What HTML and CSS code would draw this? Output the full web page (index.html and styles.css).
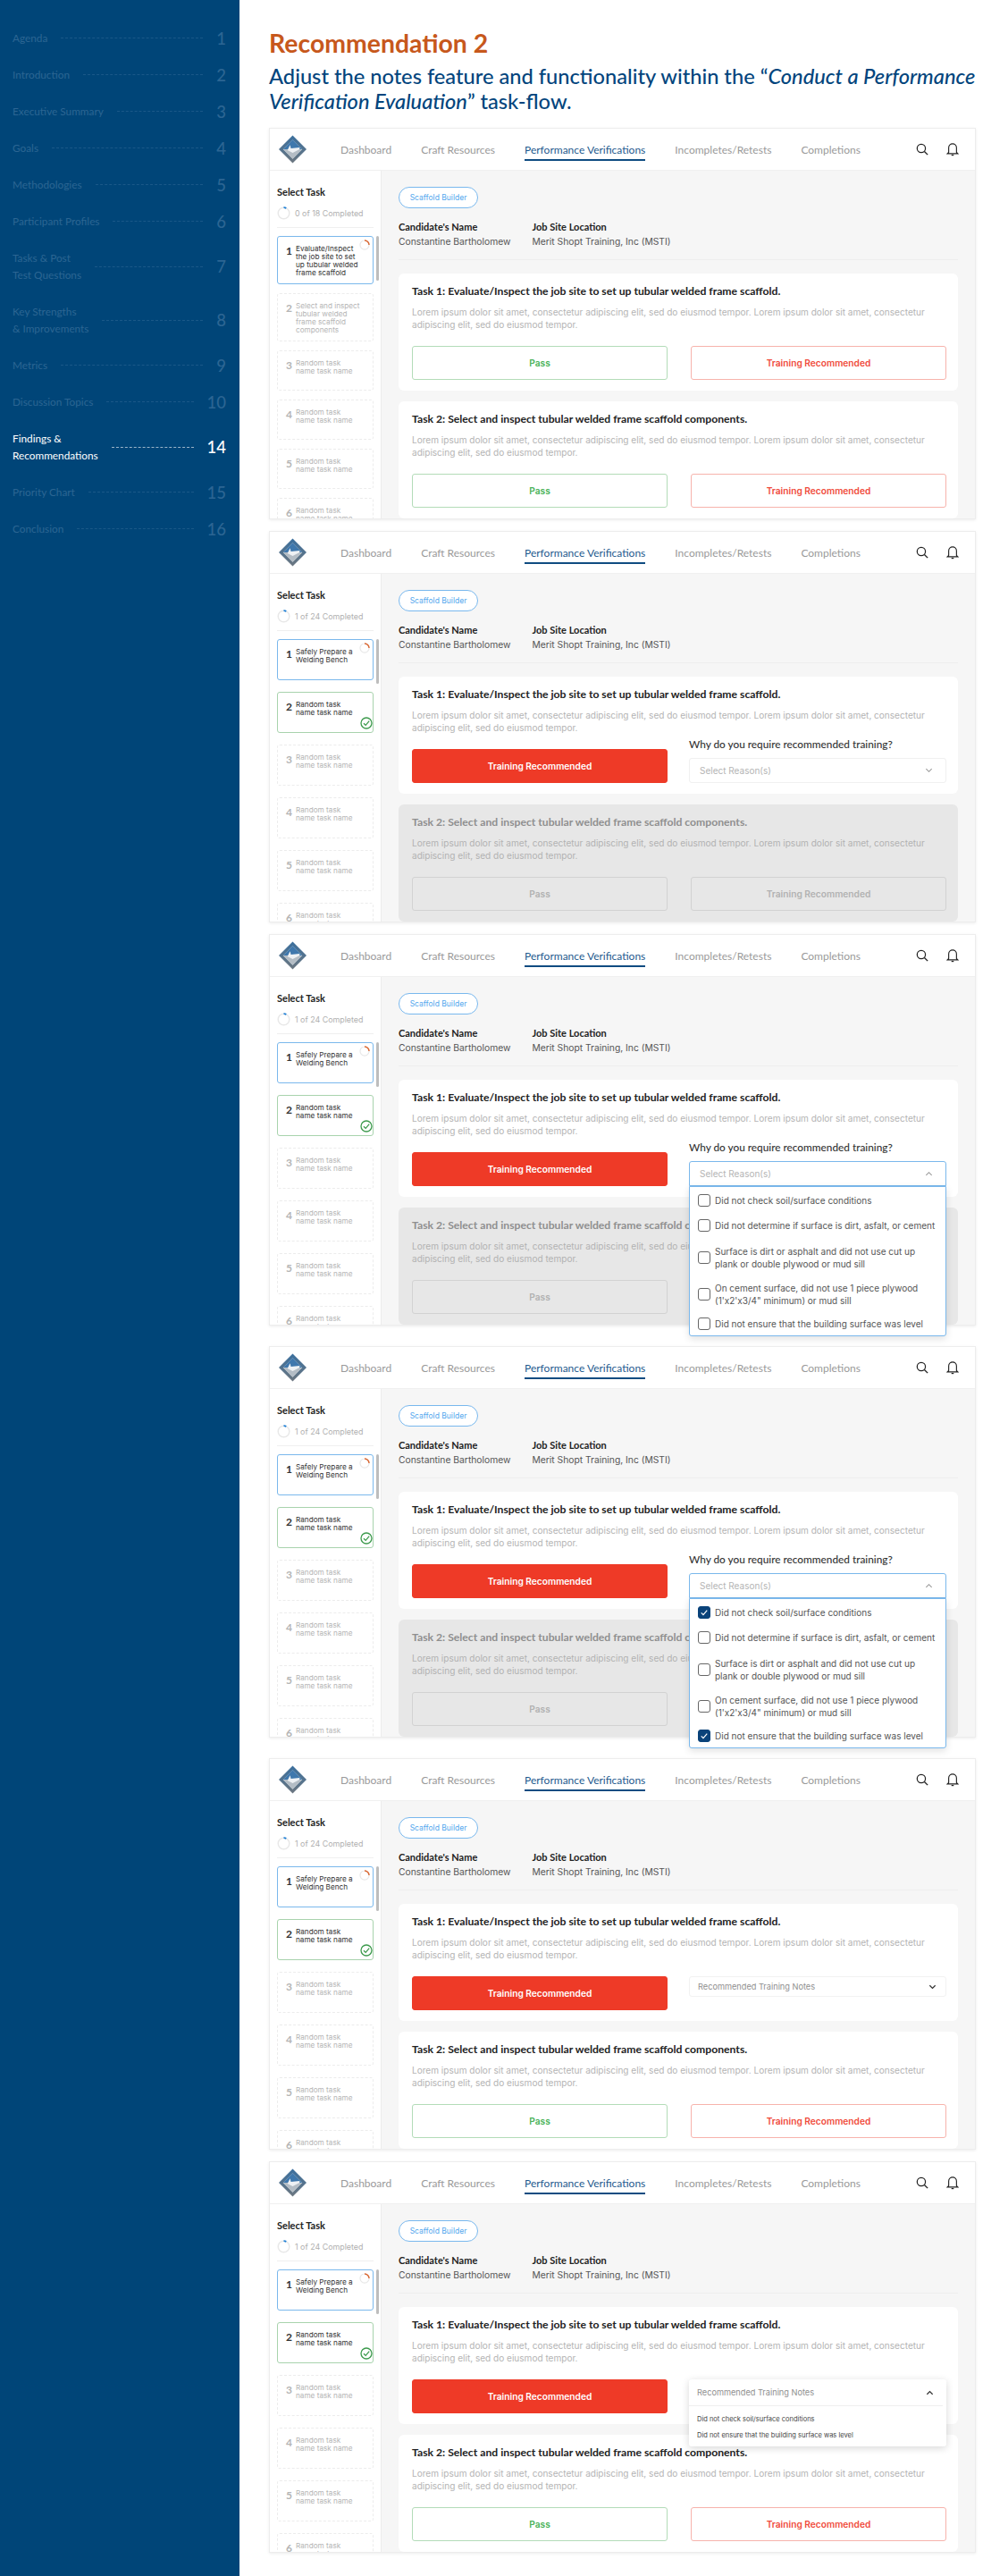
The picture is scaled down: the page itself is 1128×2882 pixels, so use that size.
FILE: index.html
```html
<!DOCTYPE html>
<html lang="en">
<head>
    <meta charset="UTF-8">
    <title>Recommendation 2</title>
    <link rel="stylesheet" href="styles.css">
</head>
<body>
    <svg class="defs" width="0" height="0">
        <defs>
            <linearGradient id="logo-edge" x1="0" y1="0" x2="0" y2="1">
                <stop offset="0" stop-color="#3a6f9e"/>
                <stop offset="1" stop-color="#6d7780"/>
            </linearGradient>
        </defs>
        <symbol id="logo" viewBox="0 0 32 32">
            <polygon points="16,0 32,16 16,32 0,16" fill="url(#logo-edge)"/>
            <polygon points="16,5 27,16 16,27 5,16" fill="#d5dbe0"/>
            <polygon points="16,5 27,16 5,16" fill="#3f78ad"/>
            <polygon points="5,16 27,16 16,27" fill="#b4bdc5"/>
            <path d="M10 17 L13 11 L14 15 L24 14 L24 16 L16 20 Z" fill="#eef1f4"/>
        </symbol>
        <symbol id="search" viewBox="0 0 16 16">
            <circle cx="6.8" cy="6.8" r="5.3" fill="none" stroke="#222" stroke-width="1.4"/>
            <path d="M10.8 10.8 L15 15" stroke="#222" stroke-width="1.6"/>
        </symbol>
        <symbol id="bell" viewBox="0 0 16 18">
            <path d="M3 13 V7 a5 5 0 0 1 10 0 V13 L14.5 14.5 H1.5 Z" fill="none" stroke="#222" stroke-width="1.3"/>
            <path d="M6.5 16.5 H9.5" stroke="#222" stroke-width="1.4"/>
        </symbol>
        <symbol id="ring-blue" viewBox="0 0 16 16">
            <circle cx="8" cy="8" r="6.7" fill="none" stroke="#e8e8e8" stroke-width="1.6"/>
            <path d="M8 1.3 A6.7 6.7 0 0 1 11 2" fill="none" stroke="#1d7fd6" stroke-width="1.8"/>
        </symbol>
        <symbol id="ring-orange" viewBox="0 0 16 16">
            <circle cx="8" cy="8" r="6.7" fill="none" stroke="#e8e8e8" stroke-width="1.6"/>
            <path d="M8 1.3 A6.7 6.7 0 0 1 14.7 8" fill="none" stroke="#d9622b" stroke-width="1.8"/>
        </symbol>
        <symbol id="done" viewBox="0 0 14 14">
            <circle cx="7" cy="7" r="6" fill="#fff" stroke="#3c9a4c" stroke-width="1.3"/>
            <path d="M4 7.2 L6.2 9.4 L10.2 4.6" fill="none" stroke="#3c9a4c" stroke-width="1.3"/>
        </symbol>
        <symbol id="tick" viewBox="0 0 14 14">
            <path d="M3.2 7.4 L5.8 10 L10.8 4.2" fill="none" stroke="#fff" stroke-width="1.4"/>
        </symbol>
    </svg>

    <div id="wrap">
        <!--left navigation-->
        <ul id="leftnav">
            <li><span>Agenda</span><i></i><b>1</b></li>
            <li><span>Introduction</span><i></i><b>2</b></li>
            <li><span>Executive Summary</span><i></i><b>3</b></li>
            <li><span>Goals</span><i></i><b>4</b></li>
            <li><span>Methodologies</span><i></i><b>5</b></li>
            <li><span>Participant Profiles</span><i></i><b>6</b></li>
            <li class="two"><span>Tasks &amp; Post<br>Test Questions</span><i></i><b>7</b></li>
            <li class="two"><span>Key Strengths<br>&amp; Improvements</span><i></i><b>8</b></li>
            <li><span>Metrics</span><i></i><b>9</b></li>
            <li><span>Discussion Topics</span><i></i><b>10</b></li>
            <li class="two on"><span>Findings &amp;<br>Recommendations</span><i></i><b>14</b></li>
            <li><span>Priority Chart</span><i></i><b>15</b></li>
            <li><span>Conclusion</span><i></i><b>16</b></li>
        </ul>

        <div id="content">
            <h1>Recommendation 2</h1>
            <h2>Adjust the notes feature and functionality within the “<em>Conduct a Performance<br>Verification Evaluation</em>” task-flow.</h2>

            <!--screen 1-->
            <div class="panel">
                <div class="topbar">
                    <svg class="logo"><use href="#logo"/></svg>
                    <a>Dashboard</a><a>Craft Resources</a><a class="active">Performance Verifications</a><a>Incompletes/Retests</a><a>Completions</a>
                    <svg class="icon first"><use href="#search"/></svg><svg class="icon"><use href="#bell"/></svg>
                </div>
                <div class="body">
                    <div class="tasks">
                        <h3>Select Task</h3>
                        <div class="count"><svg><use href="#ring-blue"/></svg>0 of 18 Completed</div>
                        <div class="scroll"></div>
                        <div class="list tight">
                            <div class="task current tall"><b>1</b><p>Evaluate/Inspect<br>the job site to set<br>up tubular welded<br>frame scaffold</p><svg class="ring"><use href="#ring-orange"/></svg></div>
                            <div class="task tall"><b>2</b><p>Select and inspect<br>tubular welded<br>frame scaffold<br>components</p></div>
                            <div class="task"><b>3</b><p>Random task<br>name task name</p></div>
                            <div class="task"><b>4</b><p>Random task<br>name task name</p></div>
                            <div class="task"><b>5</b><p>Random task<br>name task name</p></div>
                            <div class="task"><b>6</b><p>Random task<br>name task name</p></div>
                        </div>
                    </div>
                    <div class="main">
                        <div class="pill">Scaffold Builder</div>
                        <div class="people">
                            <div><h4>Candidate's Name</h4><p>Constantine Bartholomew</p></div>
                            <div><h4>Job Site Location</h4><p>Merit Shopt Training, Inc (MSTI)</p></div>
                        </div>
                        <div class="card">
                            <h5>Task 1: Evaluate/Inspect the job site to set up tubular welded frame scaffold.</h5>
                            <p class="lorem">Lorem ipsum dolor sit amet, consectetur adipiscing elit, sed do eiusmod tempor. Lorem ipsum dolor sit amet, consectetur<br>adipiscing elit, sed do eiusmod tempor.</p>
                            <div class="row"><button class="pass">Pass</button><button class="train">Training Recommended</button></div>
                        </div>
                        <div class="card">
                            <h5>Task 2: Select and inspect tubular welded frame scaffold components.</h5>
                            <p class="lorem">Lorem ipsum dolor sit amet, consectetur adipiscing elit, sed do eiusmod tempor. Lorem ipsum dolor sit amet, consectetur<br>adipiscing elit, sed do eiusmod tempor.</p>
                            <div class="row"><button class="pass">Pass</button><button class="train">Training Recommended</button></div>
                        </div>
                    </div>
                </div>
            </div>

            <!--screen 2-->
            <div class="panel">
                <div class="topbar">
                    <svg class="logo"><use href="#logo"/></svg>
                    <a>Dashboard</a><a>Craft Resources</a><a class="active">Performance Verifications</a><a>Incompletes/Retests</a><a>Completions</a>
                    <svg class="icon first"><use href="#search"/></svg><svg class="icon"><use href="#bell"/></svg>
                </div>
                <div class="body">
                    <div class="tasks">
                        <h3>Select Task</h3>
                        <div class="count"><svg><use href="#ring-blue"/></svg>1 of 24 Completed</div>
                        <div class="scroll"></div>
                        <div class="list">
                            <div class="task current"><b>1</b><p>Safely Prepare a<br>Welding Bench</p><svg class="ring"><use href="#ring-orange"/></svg></div>
                            <div class="task finished"><b>2</b><p>Random task<br>name task name</p><svg class="check"><use href="#done"/></svg></div>
                            <div class="task"><b>3</b><p>Random task<br>name task name</p></div>
                            <div class="task"><b>4</b><p>Random task<br>name task name</p></div>
                            <div class="task"><b>5</b><p>Random task<br>name task name</p></div>
                            <div class="task"><b>6</b><p>Random task<br>name task name</p></div>
                        </div>
                    </div>
                    <div class="main">
                        <div class="pill">Scaffold Builder</div>
                        <div class="people">
                            <div><h4>Candidate's Name</h4><p>Constantine Bartholomew</p></div>
                            <div><h4>Job Site Location</h4><p>Merit Shopt Training, Inc (MSTI)</p></div>
                        </div>
                        <div class="card">
                            <h5>Task 1: Evaluate/Inspect the job site to set up tubular welded frame scaffold.</h5>
                            <p class="lorem">Lorem ipsum dolor sit amet, consectetur adipiscing elit, sed do eiusmod tempor. Lorem ipsum dolor sit amet, consectetur<br>adipiscing elit, sed do eiusmod tempor.</p>
                            <div class="row">
                                <button class="solid">Training Recommended</button>
                                <div class="why">
                                    <label>Why do you require recommended training?</label>
                                    <div class="select">Select Reason(s)<svg class="chev" viewBox="0 0 10 6"><path d="M1.5 1 L5 4.5 L8.5 1"/></svg></div>
                                </div>
                            </div>
                        </div>
                        <div class="card off">
                            <h5>Task 2: Select and inspect tubular welded frame scaffold components.</h5>
                            <p class="lorem">Lorem ipsum dolor sit amet, consectetur adipiscing elit, sed do eiusmod tempor. Lorem ipsum dolor sit amet, consectetur<br>adipiscing elit, sed do eiusmod tempor.</p>
                            <div class="row"><button class="pass">Pass</button><button class="train">Training Recommended</button></div>
                        </div>
                    </div>
                </div>
            </div>

            <!--screen 3-->
            <div class="panel wide-gap">
                <div class="topbar">
                    <svg class="logo"><use href="#logo"/></svg>
                    <a>Dashboard</a><a>Craft Resources</a><a class="active">Performance Verifications</a><a>Incompletes/Retests</a><a>Completions</a>
                    <svg class="icon first"><use href="#search"/></svg><svg class="icon"><use href="#bell"/></svg>
                </div>
                <div class="body">
                    <div class="tasks">
                        <h3>Select Task</h3>
                        <div class="count"><svg><use href="#ring-blue"/></svg>1 of 24 Completed</div>
                        <div class="scroll"></div>
                        <div class="list">
                            <div class="task current"><b>1</b><p>Safely Prepare a<br>Welding Bench</p><svg class="ring"><use href="#ring-orange"/></svg></div>
                            <div class="task finished"><b>2</b><p>Random task<br>name task name</p><svg class="check"><use href="#done"/></svg></div>
                            <div class="task"><b>3</b><p>Random task<br>name task name</p></div>
                            <div class="task"><b>4</b><p>Random task<br>name task name</p></div>
                            <div class="task"><b>5</b><p>Random task<br>name task name</p></div>
                            <div class="task"><b>6</b><p>Random task<br>name task name</p></div>
                        </div>
                    </div>
                    <div class="main">
                        <div class="pill">Scaffold Builder</div>
                        <div class="people">
                            <div><h4>Candidate's Name</h4><p>Constantine Bartholomew</p></div>
                            <div><h4>Job Site Location</h4><p>Merit Shopt Training, Inc (MSTI)</p></div>
                        </div>
                        <div class="card">
                            <h5>Task 1: Evaluate/Inspect the job site to set up tubular welded frame scaffold.</h5>
                            <p class="lorem">Lorem ipsum dolor sit amet, consectetur adipiscing elit, sed do eiusmod tempor. Lorem ipsum dolor sit amet, consectetur<br>adipiscing elit, sed do eiusmod tempor.</p>
                            <div class="row">
                                <button class="solid">Training Recommended</button>
                                <div class="why">
                                    <label>Why do you require recommended training?</label>
                                    <div class="select open">Select Reason(s)<svg class="chev" viewBox="0 0 10 6"><path d="M1.5 5 L5 1.5 L8.5 5"/></svg>
                                        <div class="menu">
                                            <div class="opt"><s></s>Did not check soil/surface conditions</div>
                                            <div class="opt"><s></s>Did not determine if surface is dirt, asfalt, or cement</div>
                                            <div class="opt two"><s></s><span>Surface is dirt or asphalt and did not use cut up<br>plank or double plywood or mud sill</span></div>
                                            <div class="opt two"><s></s><span>On cement surface, did not use 1 piece plywood<br>(1'x2'x3/4" minimum) or mud sill</span></div>
                                            <div class="opt"><s></s>Did not ensure that the building surface was level</div>
                                        </div>
                                    </div>
                                </div>
                            </div>
                        </div>
                        <div class="card off">
                            <h5>Task 2: Select and inspect tubular welded frame scaffold components.</h5>
                            <p class="lorem">Lorem ipsum dolor sit amet, consectetur adipiscing elit, sed do eiusmod tempor. Lorem ipsum dolor sit amet, consectetur<br>adipiscing elit, sed do eiusmod tempor.</p>
                            <div class="row"><button class="pass">Pass</button><button class="train">Training Recommended</button></div>
                        </div>
                    </div>
                </div>
            </div>

            <!--screen 4-->
            <div class="panel wide-gap">
                <div class="topbar">
                    <svg class="logo"><use href="#logo"/></svg>
                    <a>Dashboard</a><a>Craft Resources</a><a class="active">Performance Verifications</a><a>Incompletes/Retests</a><a>Completions</a>
                    <svg class="icon first"><use href="#search"/></svg><svg class="icon"><use href="#bell"/></svg>
                </div>
                <div class="body">
                    <div class="tasks">
                        <h3>Select Task</h3>
                        <div class="count"><svg><use href="#ring-blue"/></svg>1 of 24 Completed</div>
                        <div class="scroll"></div>
                        <div class="list">
                            <div class="task current"><b>1</b><p>Safely Prepare a<br>Welding Bench</p><svg class="ring"><use href="#ring-orange"/></svg></div>
                            <div class="task finished"><b>2</b><p>Random task<br>name task name</p><svg class="check"><use href="#done"/></svg></div>
                            <div class="task"><b>3</b><p>Random task<br>name task name</p></div>
                            <div class="task"><b>4</b><p>Random task<br>name task name</p></div>
                            <div class="task"><b>5</b><p>Random task<br>name task name</p></div>
                            <div class="task"><b>6</b><p>Random task<br>name task name</p></div>
                        </div>
                    </div>
                    <div class="main">
                        <div class="pill">Scaffold Builder</div>
                        <div class="people">
                            <div><h4>Candidate's Name</h4><p>Constantine Bartholomew</p></div>
                            <div><h4>Job Site Location</h4><p>Merit Shopt Training, Inc (MSTI)</p></div>
                        </div>
                        <div class="card">
                            <h5>Task 1: Evaluate/Inspect the job site to set up tubular welded frame scaffold.</h5>
                            <p class="lorem">Lorem ipsum dolor sit amet, consectetur adipiscing elit, sed do eiusmod tempor. Lorem ipsum dolor sit amet, consectetur<br>adipiscing elit, sed do eiusmod tempor.</p>
                            <div class="row">
                                <button class="solid">Training Recommended</button>
                                <div class="why">
                                    <label>Why do you require recommended training?</label>
                                    <div class="select open">Select Reason(s)<svg class="chev" viewBox="0 0 10 6"><path d="M1.5 5 L5 1.5 L8.5 5"/></svg>
                                        <div class="menu">
                                            <div class="opt"><s class="ticked"><svg><use href="#tick"/></svg></s>Did not check soil/surface conditions</div>
                                            <div class="opt"><s></s>Did not determine if surface is dirt, asfalt, or cement</div>
                                            <div class="opt two"><s></s><span>Surface is dirt or asphalt and did not use cut up<br>plank or double plywood or mud sill</span></div>
                                            <div class="opt two"><s></s><span>On cement surface, did not use 1 piece plywood<br>(1'x2'x3/4" minimum) or mud sill</span></div>
                                            <div class="opt"><s class="ticked"><svg><use href="#tick"/></svg></s>Did not ensure that the building surface was level</div>
                                        </div>
                                    </div>
                                </div>
                            </div>
                        </div>
                        <div class="card off">
                            <h5>Task 2: Select and inspect tubular welded frame scaffold components.</h5>
                            <p class="lorem">Lorem ipsum dolor sit amet, consectetur adipiscing elit, sed do eiusmod tempor. Lorem ipsum dolor sit amet, consectetur<br>adipiscing elit, sed do eiusmod tempor.</p>
                            <div class="row"><button class="pass">Pass</button><button class="train">Training Recommended</button></div>
                        </div>
                    </div>
                </div>
            </div>

            <!--screen 5-->
            <div class="panel">
                <div class="topbar">
                    <svg class="logo"><use href="#logo"/></svg>
                    <a>Dashboard</a><a>Craft Resources</a><a class="active">Performance Verifications</a><a>Incompletes/Retests</a><a>Completions</a>
                    <svg class="icon first"><use href="#search"/></svg><svg class="icon"><use href="#bell"/></svg>
                </div>
                <div class="body">
                    <div class="tasks">
                        <h3>Select Task</h3>
                        <div class="count"><svg><use href="#ring-blue"/></svg>1 of 24 Completed</div>
                        <div class="scroll"></div>
                        <div class="list">
                            <div class="task current"><b>1</b><p>Safely Prepare a<br>Welding Bench</p><svg class="ring"><use href="#ring-orange"/></svg></div>
                            <div class="task finished"><b>2</b><p>Random task<br>name task name</p><svg class="check"><use href="#done"/></svg></div>
                            <div class="task"><b>3</b><p>Random task<br>name task name</p></div>
                            <div class="task"><b>4</b><p>Random task<br>name task name</p></div>
                            <div class="task"><b>5</b><p>Random task<br>name task name</p></div>
                            <div class="task"><b>6</b><p>Random task<br>name task name</p></div>
                        </div>
                    </div>
                    <div class="main">
                        <div class="pill">Scaffold Builder</div>
                        <div class="people">
                            <div><h4>Candidate's Name</h4><p>Constantine Bartholomew</p></div>
                            <div><h4>Job Site Location</h4><p>Merit Shopt Training, Inc (MSTI)</p></div>
                        </div>
                        <div class="card">
                            <h5>Task 1: Evaluate/Inspect the job site to set up tubular welded frame scaffold.</h5>
                            <p class="lorem">Lorem ipsum dolor sit amet, consectetur adipiscing elit, sed do eiusmod tempor. Lorem ipsum dolor sit amet, consectetur<br>adipiscing elit, sed do eiusmod tempor.</p>
                            <div class="row">
                                <button class="solid">Training Recommended</button>
                                <div class="notes closed"><div class="notes-head">Recommended Training Notes<svg class="chev dark" viewBox="0 0 10 6"><path d="M1.5 1 L5 4.5 L8.5 1"/></svg></div></div>
                            </div>
                        </div>
                        <div class="card">
                            <h5>Task 2: Select and inspect tubular welded frame scaffold components.</h5>
                            <p class="lorem">Lorem ipsum dolor sit amet, consectetur adipiscing elit, sed do eiusmod tempor. Lorem ipsum dolor sit amet, consectetur<br>adipiscing elit, sed do eiusmod tempor.</p>
                            <div class="row"><button class="pass">Pass</button><button class="train">Training Recommended</button></div>
                        </div>
                    </div>
                </div>
            </div>

            <!--screen 6-->
            <div class="panel">
                <div class="topbar">
                    <svg class="logo"><use href="#logo"/></svg>
                    <a>Dashboard</a><a>Craft Resources</a><a class="active">Performance Verifications</a><a>Incompletes/Retests</a><a>Completions</a>
                    <svg class="icon first"><use href="#search"/></svg><svg class="icon"><use href="#bell"/></svg>
                </div>
                <div class="body">
                    <div class="tasks">
                        <h3>Select Task</h3>
                        <div class="count"><svg><use href="#ring-blue"/></svg>1 of 24 Completed</div>
                        <div class="scroll"></div>
                        <div class="list">
                            <div class="task current"><b>1</b><p>Safely Prepare a<br>Welding Bench</p><svg class="ring"><use href="#ring-orange"/></svg></div>
                            <div class="task finished"><b>2</b><p>Random task<br>name task name</p><svg class="check"><use href="#done"/></svg></div>
                            <div class="task"><b>3</b><p>Random task<br>name task name</p></div>
                            <div class="task"><b>4</b><p>Random task<br>name task name</p></div>
                            <div class="task"><b>5</b><p>Random task<br>name task name</p></div>
                            <div class="task"><b>6</b><p>Random task<br>name task name</p></div>
                        </div>
                    </div>
                    <div class="main">
                        <div class="pill">Scaffold Builder</div>
                        <div class="people">
                            <div><h4>Candidate's Name</h4><p>Constantine Bartholomew</p></div>
                            <div><h4>Job Site Location</h4><p>Merit Shopt Training, Inc (MSTI)</p></div>
                        </div>
                        <div class="card">
                            <h5>Task 1: Evaluate/Inspect the job site to set up tubular welded frame scaffold.</h5>
                            <p class="lorem">Lorem ipsum dolor sit amet, consectetur adipiscing elit, sed do eiusmod tempor. Lorem ipsum dolor sit amet, consectetur<br>adipiscing elit, sed do eiusmod tempor.</p>
                            <div class="row">
                                <button class="solid">Training Recommended</button>
                                <div class="notes">
                                    <div class="notes-pop">
                                        <div class="notes-head">Recommended Training Notes<svg class="chev dark" viewBox="0 0 10 6"><path d="M1.5 5 L5 1.5 L8.5 5"/></svg></div>
                                        <p>Did not check soil/surface conditions</p>
                                        <p>Did not ensure that the building surface was level</p>
                                    </div>
                                </div>
                            </div>
                        </div>
                        <div class="card">
                            <h5>Task 2: Select and inspect tubular welded frame scaffold components.</h5>
                            <p class="lorem">Lorem ipsum dolor sit amet, consectetur adipiscing elit, sed do eiusmod tempor. Lorem ipsum dolor sit amet, consectetur<br>adipiscing elit, sed do eiusmod tempor.</p>
                            <div class="row"><button class="pass">Pass</button><button class="train">Training Recommended</button></div>
                        </div>
                    </div>
                </div>
            </div>
        </div>
    </div>
</body>
</html>
```
FILE: styles.css
```css
*{
    margin: 0;
    padding: 0;
    box-sizing: border-box;
}
body{
    font-family: "Lato", "Liberation Sans", sans-serif;
    background-color: white;
    width: 1128px;
    height: 2882px;
    overflow: hidden;
}
.defs{
    display: block;
    height: 0;
}
#wrap{
    display: flex;
    height: 2882px;
}
/*left navigation*/
#leftnav{
    width: 268px;
    flex: none;
    background-color: #004578;
    list-style-type: none;
    padding: 22px 15px 0 14px;
}
#leftnav li{
    display: flex;
    align-items: center;
    height: 41px;
    color: #2c6593;
    font-size: 11.8px;
}
#leftnav li.two{
    height: 60px;
    line-height: 19px;
}
#leftnav li.on{
    color: white;
}
#leftnav i{
    flex: 1;
    border-top: 1px dashed currentColor;
    margin: 0 15px;
    opacity: .6;
}
#leftnav b{
    font-size: 18.5px;
    font-weight: 500;
    text-align: right;
}
/*page heading*/
#content{
    flex: 1;
    min-width: 0;
    padding: 0 36px 0 33px;
}
h1{
    color: #c7581c;
    font-size: 28.4px;
    font-weight: 700;
    line-height: 36px;
    padding-top: 30px;
}
h2{
    color: #03457d;
    font-size: 23.65px;
    font-weight: 500;
    line-height: 28px;
    margin-top: 5px;
    margin-bottom: 16px;
    white-space: nowrap;
}
/*one app screenshot*/
.panel{
    height: 438px;
    margin-bottom: 13px;
    border: 1px solid #ededed;
    box-shadow: 0 1px 3px rgba(0,0,0,.08);
    display: flex;
    flex-direction: column;
}
.panel.wide-gap{
    margin-bottom: 23px;
}
.topbar{
    height: 47px;
    flex: none;
    display: flex;
    align-items: center;
    padding: 0 18px 0 10px;
    background-color: white;
    border-bottom: 1px solid #f0f0f0;
}
.logo{
    width: 31px;
    height: 32px;
    margin-right: 38px;
}
.topbar a{
    color: #9a9a9a;
    font-size: 12px;
    margin-right: 33px;
    padding: 6px 0 3px;
    border-bottom: 2px solid transparent;
    white-space: nowrap;
}
.topbar a.active{
    color: #1e5a8e;
    border-bottom-color: #0f4c81;
}
.icon{
    width: 14px;
    height: 16px;
    margin-left: 20px;
}
.icon.first{
    margin-left: auto;
}
.body{
    flex: 1;
    display: flex;
    min-height: 0;
}
/*task column*/
.tasks{
    width: 125px;
    flex: none;
    background-color: white;
    border-right: 1px solid #ececec;
    padding: 16px 8px 0 8px;
    position: relative;
    overflow: hidden;
}
.tasks h3{
    font-size: 11px;
    font-weight: 700;
    color: #222;
    line-height: 16px;
}
.count{
    display: flex;
    align-items: center;
    gap: 5px;
    font-family: "Inter", "Liberation Sans", sans-serif;
    font-size: 8.9px;
    color: #b0b0b0;
    height: 16px;
    margin-top: 7px;
}
.count svg{
    width: 15px;
    height: 15px;
}
.scroll{
    position: absolute;
    right: 2px;
    top: 73px;
    width: 3px;
    height: 50px;
    background-color: #bdbdbd;
    border-radius: 2px;
}
.list{
    margin-top: 8px;
    padding-top: 9px;
    border-top: 1px solid #efefef;
    display: flex;
    flex-direction: column;
    gap: 13px;
}
.list.tight{
    gap: 10px;
}
.task{
    height: 46px;
    flex: none;
    border: 1px dashed #ececec;
    border-radius: 3px;
    display: flex;
    padding: 9px 6px 0 9px;
    position: relative;
    color: #b5b5b5;
}
.list.tight .task{
    height: 45px;
}
.list.tight .task.tall{
    height: 54px;
}
.task b{
    font-size: 12px;
    font-weight: 700;
    width: 11px;
    flex: none;
    line-height: 14px;
}
.task p{
    font-family: "Inter", "Liberation Sans", sans-serif;
    font-size: 8.2px;
    line-height: 9px;
    white-space: nowrap;
}
.task.current,.task.finished{
    color: #333;
    border-style: solid;
}
.task.current{
    border-color: #7ab8ec;
}
.task.finished{
    border-color: #a8d3ad;
}
.ring{
    position: absolute;
    top: 3px;
    right: 3px;
    width: 12px;
    height: 12px;
}
.check{
    position: absolute;
    right: 0;
    bottom: 3px;
    width: 14px;
    height: 14px;
}
/*main column*/
.main{
    flex: 1;
    background-color: #f6f6f6;
    padding: 18px 19px 0 19px;
    min-width: 0;
}
.pill{
    width: 89px;
    height: 24px;
    border: 1px solid #79b8ee;
    border-radius: 12px;
    background-color: white;
    color: #54a7ee;
    font-family: "Inter", "Liberation Sans", sans-serif;
    font-size: 8.5px;
    line-height: 22px;
    text-align: center;
}
.people{
    display: flex;
    gap: 24px;
    margin-top: 13px;
    border-bottom: 1px solid #eeeeee;
    height: 45px;
}
.people h4{
    font-size: 11px;
    font-weight: 700;
    line-height: 16px;
    color: #222;
}
.people p{
    font-family: "Inter", "Liberation Sans", sans-serif;
    font-size: 10.3px;
    line-height: 16px;
    color: #555;
}
.card{
    margin-top: 12px;
    height: 131px;
    background-color: white;
    border-radius: 6px;
    padding: 12px 13px 0 15px;
}
.people + .card{
    margin-top: 15px;
}
.card h5{
    font-size: 12.2px;
    font-weight: 700;
    line-height: 16px;
    color: #222;
}
.lorem{
    font-family: "Inter", "Liberation Sans", sans-serif;
    font-size: 10.05px;
    line-height: 14px;
    color: #b4b4b4;
    margin-top: 8px;
    white-space: nowrap;
}
.row{
    display: flex;
    justify-content: space-between;
    align-items: flex-end;
    height: 55px;
}
button{
    width: 286px;
    height: 38px;
    background-color: white;
    border: 1px solid;
    border-radius: 3px;
    font-family: "Inter", "Liberation Sans", sans-serif;
    font-size: 10.2px;
    font-weight: 600;
}
.pass{
    color: #4cb35a;
    border-color: #b3dcb8;
}
.train{
    color: #f04c3c;
    border-color: #f7b3ac;
}
.solid{
    background-color: #ee3a27;
    border-color: #ee3a27;
    color: white;
}
.card.off{
    background-color: #e7e7e7;
}
.card.off h5{
    color: #8f8f8f;
}
.card.off .lorem{
    color: #b2b2b2;
}
.card.off button{
    background-color: transparent;
    border-color: #d2d2d2;
    color: #b2b2b2;
}
/*reason select*/
.why{
    width: 288px;
}
.why label{
    display: block;
    font-size: 11.8px;
    font-weight: 500;
    line-height: 16px;
    color: #333;
    margin-bottom: 7px;
}
.select{
    height: 28px;
    position: relative;
    display: flex;
    align-items: center;
    justify-content: space-between;
    padding: 0 14px 0 11px;
    background-color: white;
    border: 1px solid #f0f0f0;
    border-radius: 3px;
    font-family: "Inter", "Liberation Sans", sans-serif;
    font-size: 10px;
    color: #b4b4b4;
}
.chev{
    width: 9px;
    height: 6px;
    fill: none;
    stroke: #999;
    stroke-width: 1.2;
}
.chev.dark{
    stroke: #333;
    stroke-width: 1.4;
}
.select.open{
    border-color: #7ab8ec;
    border-radius: 3px 3px 0 0;
}
.menu{
    position: absolute;
    z-index: 5;
    top: 27px;
    left: -1px;
    right: -1px;
    height: 168px;
    padding-top: 1px;
    background-color: white;
    border: 1px solid #7ab8ec;
    border-radius: 0 0 3px 3px;
    box-shadow: 0 3px 8px rgba(0,0,0,.12);
    color: #555;
}
.opt{
    display: flex;
    align-items: center;
    gap: 5px;
    padding-left: 9px;
    height: 28px;
    line-height: 14px;
    white-space: nowrap;
}
.opt.two{
    height: 38px;
    margin-top: 3px;
}
.opt s{
    width: 14px;
    height: 14px;
    flex: none;
    background-color: white;
    border: 1px solid #666;
    border-radius: 3px;
}
.opt s.ticked{
    background-color: #0a437a;
    border-color: #0a437a;
}
.opt s svg{
    display: block;
    width: 12px;
    height: 12px;
}
/*training notes*/
.notes{
    width: 288px;
    height: 38px;
    position: relative;
}
.notes-head{
    height: 30px;
    display: flex;
    align-items: center;
    justify-content: space-between;
    padding: 0 10px 0 9px;
    font-family: "Inter", "Liberation Sans", sans-serif;
    font-size: 9.2px;
    color: #8f8f8f;
}
.notes.closed{
    height: 23px;
    margin-bottom: 15px;
    background-color: white;
    border: 1px solid #f2f2f2;
    border-radius: 3px;
}
.notes.closed .notes-head{
    height: 21px;
}
.notes-pop{
    position: absolute;
    z-index: 5;
    top: 0;
    left: 0;
    right: 0;
    height: 75px;
    background-color: white;
    border-radius: 3px;
    box-shadow: 0 2px 8px rgba(0,0,0,.16);
    padding: 0 4px 0 0;
}
.notes-pop p{
    font-family: "Inter", "Liberation Sans", sans-serif;
    font-size: 7.5px;
    line-height: 18px;
    color: #444;
    padding-left: 9px;
}
.notes-pop .notes-head{
    border-bottom: 1px solid #eeeeee;
    margin-bottom: 6px;
}
```
